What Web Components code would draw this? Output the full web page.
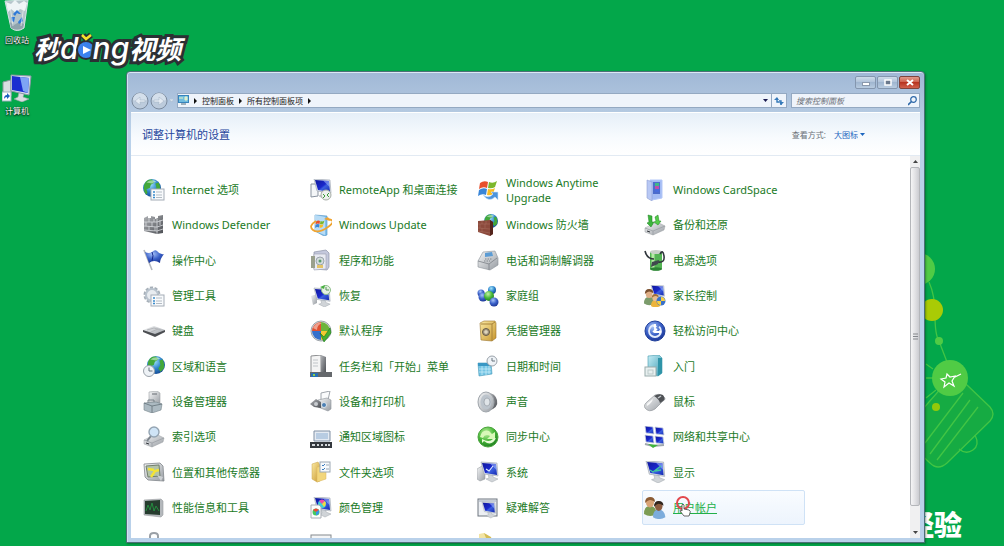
<!DOCTYPE html>
<html lang="zh-CN">
<head>
<meta charset="utf-8">
<title>控制面板</title>
<style>
  html, body {
    height: 100%;
    margin: 0;
  }

  body {
    overflow: hidden;
    font-family: "Noto Sans", "Noto Sans CJK SC", sans-serif;
    font-size: 11px;
  }
</style>
</head>
<body>
<desk-top></desk-top>

<script>
// shared gradients, every icon gets its own copy since ids stay inside a shadow root
const defs = `
  <defs>
    <linearGradient id="blue" x1="0" y1="0" x2="1" y2="1">
      <stop offset="0" stop-color="#10189c"/><stop offset=".5" stop-color="#1a28cc"/>
      <stop offset=".6" stop-color="#3c60e0"/><stop offset="1" stop-color="#1428b0"/>
    </linearGradient>
    <linearGradient id="gray" x1="0" y1="0" x2="1" y2="1">
      <stop offset="0" stop-color="#f6f7f8"/><stop offset="1" stop-color="#979ca2"/>
    </linearGradient>
    <linearGradient id="dark" x1="0" y1="0" x2="1" y2="1">
      <stop offset="0" stop-color="#b0b2b6"/><stop offset="1" stop-color="#4c4f54"/>
    </linearGradient>
    <radialGradient id="sea" cx=".4" cy=".3" r=".8">
      <stop offset="0" stop-color="#a4e4fa"/><stop offset=".5" stop-color="#2f86cc"/><stop offset="1" stop-color="#103c86"/>
    </radialGradient>
    <radialGradient id="green" cx=".4" cy=".3" r=".8">
      <stop offset="0" stop-color="#c4f2a4"/><stop offset=".5" stop-color="#48b838"/><stop offset="1" stop-color="#14701c"/>
    </radialGradient>
    <radialGradient id="ball" cx=".4" cy=".3" r=".8">
      <stop offset="0" stop-color="#a8c4f8"/><stop offset=".5" stop-color="#3a60c8"/><stop offset="1" stop-color="#162c88"/>
    </radialGradient>
    <linearGradient id="gold" x1="0" y1="0" x2="1" y2="1">
      <stop offset="0" stop-color="#fbeaa4"/><stop offset="1" stop-color="#c8962c"/>
    </linearGradient>
    <linearGradient id="aqua" x1="0" y1="0" x2="1" y2="1">
      <stop offset="0" stop-color="#c8eef6"/><stop offset="1" stop-color="#3a9cb4"/>
    </linearGradient>
  </defs>`;

const globe = (x, y, r) => `
  <g transform="translate(${x} ${y}) scale(${r / 8})">
    <circle r="8" fill="url(#sea)"/>
    <path d="M-7-3Q-5-8 0-7.500L2-5-1-3-2 0-5 1-4 4-5 6Q-8 3-7-3zM3-4L6-5Q8-1 7 3L4 6 2 3 4 0z" fill="#43a83a"/>
    <path d="M-5-5Q-1-8 4-6L0-4z" fill="#d4f4d8" opacity=".6"/>
  </g>`;

const clock = (x, y, r) => `
  <circle cx="${x}" cy="${y}" r="${r}" fill="#eef2f6" stroke="#9aa2aa"/>
  <path d="M${x} ${y - r + 2}V${y}H${x + r - 2}" fill="none" stroke="#68747e"/>`;

const list = (x, y) => `
  <rect x="${x}" y="${y}" width="13" height="11" fill="#f8fafc" stroke="#a4acb6"/>
  <path d="M${x + 2} ${y + 3}h2m-2 3h2m-2 2.500h2" stroke="#3a8ccc" stroke-width="1.500"/>
  <path d="M${x + 5} ${y + 3}h6m-6 3h6m-6 2.500h6" stroke="#b4bcc4"/>`;

const monitor = (x, y, s) => `
  <g transform="translate(${x} ${y}) scale(${s})">
    <path d="M7 12L12 13 12 15 17 17 11 20 5 17 8 16z" fill="#d0d4d8" stroke="#a2a8ae" stroke-width=".5"/>
    <path d="M0 0L16 1 17 14 3 12z" fill="#dde1e6" stroke="#9aa3b0" stroke-width=".6"/>
    <path d="M1 1L15 2 16 13 4 11z" fill="url(#blue)"/>
    <path d="M9 1.500L15 2 15.500 8Z" fill="#9cb8fa" opacity=".6"/>
  </g>`;

const tower = `<path d="M0 8L5 5 8 7V18L3 20 0 18z" fill="url(#gray)" stroke="#9b9fa5" stroke-width=".6"/>`;

const person = (x, y, s, skin, hair, shirt) => `
  <g transform="translate(${x} ${y}) scale(${s})">
    <path d="M0 17Q0 9 6 9T13 17Q6 21 0 17z" fill="${shirt}"/>
    <ellipse cx="6" cy="5.500" rx="4" ry="5" fill="${skin}"/>
    <path d="M1 6Q1 0 6 0T11 5Q8 3 6 3T1 6z" fill="${hair}"/>
  </g>`;

const flag = `
  <path d="M2 5Q6 2 10 4L9 10Q5 8 1 11z" fill="#e8502c"/>
  <path d="M11 4Q15 6 19 3L17 9Q14 11 10 10z" fill="#7cb82c"/>
  <path d="M1 12Q5 9 9 11L8 17Q4 15 0 18z" fill="#3a86d8"/>
  <path d="M10 11Q14 12 17 10L15 16Q12 18 9 17z" fill="#f8bc24"/>`;

const drive = `
  <path d="M1 14L13 8 21 12 20 16 9 21 1 18z" fill="url(#gray)" stroke="#9a9ea2" stroke-width=".5"/>
  <path d="M1 14L9 17 21 12M9 17V21" fill="none" stroke="#9b9fa5" stroke-width=".8"/>
  <path d="M3 17L6 18" stroke="#30343a"/>`;

const icons = {
  internet: globe(9, 9, 9) + list(8, 10),
  remote: `<path d="M1 5H8V17L1 18z" fill="#f4f6f8" stroke="#8a93a0"/>` + monitor(4, 0, 1) +
    `<circle cx="16" cy="16" r="5" fill="#eef0ee" stroke="#a8aea8"/><path d="M13 15l2 2-2 2m6-5-2 2 2 2" fill="none" stroke="#3c9c3c"/>`,
  anytime: `<g transform="translate(1 -1)">${flag}</g><path d="M6 16Q12 20 16 15L14 13 21 13V21L18 18Q12 24 6 16z" fill="#4c94dc" stroke="#d4e8fa" stroke-width=".6"/>`,
  card: `<path d="M6 1H18V19L8 21 6 19z" fill="#a4bcf4" stroke="#b4c8f8"/><path d="M3 1L8 3V22L3 19z" fill="#b8c8f4" stroke="#8f9fd4" stroke-width=".6"/>
    <path d="M9 3H16V15H9z" fill="#4c6ccc"/><path d="M11 7h4v3h-4z" fill="#c04cac"/><path d="M11 10h4v3h-4z" fill="#486cdc"/><path d="M11 4h4v3h-4z" fill="#40b888"/>`,
  defender: `<path d="M1 4L5 2 5 4 8 4 8 2 12 3 12 5 15 4 15 2 20 1V19L14 20 1 17z" fill="url(#dark)"/>
    <path d="M1 8H14L20 6M1 12L14 13 20 11M1 16L14 17 20 15M6 4V8M11 5V8M3 8V12M9 8V13M6 12V16M12 13V17M14 5V20M17 6V11" stroke="#d8dade" fill="none" stroke-width=".8"/>`,
  update: `<path d="M5 1L17 2V21L14 22 5 17z" fill="#84c0ec" stroke="#4c90c4" stroke-width=".6"/><path d="M5 1L15 3V21L5 17z" fill="#b8dcf6"/>
    <g transform="translate(5 5) scale(.5)">${flag}</g><path d="M6 7Q-2 12 3 16T18 13 17 5" fill="none" stroke="#f0a430" stroke-width="1.800"/><path d="M14 5L18 3 20 7z" fill="#f0a430"/>`,
  firewall: globe(14, 7, 7) + `<path d="M1 7L13 6 16 8V20L13 22 1 18z" fill="#8c4a3c"/><path d="M13 6L16 8V20L13 22z" fill="#54241c"/>
    <path d="M1 10H13M1 14L13 15M1 17L13 19M5 7V10M9 7V10M3 10V14M8 10V14M5 14V18" stroke="#a87060" stroke-width=".5"/>`,
  backup: drive + `<path d="M4 1L8 2 8 8 10 8 7 13 3 9 5 8z" fill="#3cb43c" stroke="#1c8020" stroke-width=".5"/><path d="M11 3L14 1 15 7 17 7 14 11 10 8 12 7z" fill="#54cc48" stroke="#1c8020" stroke-width=".5"/>`,
  action: `<path d="M1 1L9 21" stroke="#b4b8be" stroke-width="1.600"/><path d="M2 3Q6 5 9 3 12 0 14 2 17 6 21 5 17 10 17 14 11 10 6 14z" fill="url(#ball)"/><path d="M9 3Q11 6 9 12" stroke="#14288c" fill="none"/>`,
  programs: `<path d="M4 3L16 1 19 4V18L17 21 4 20z" fill="#c4c8dc" stroke="#8e93a8" stroke-width=".7"/><path d="M4 5H16V20L4 21z" fill="#e8eaf2" stroke="#9ba0b0" stroke-width=".6"/>
    <rect x="1" y="7" width="4" height="12" fill="#9aa08c"/><circle cx="10" cy="12" r="4" fill="#d4dcdc" stroke="#9aa4ac"/><circle cx="10" cy="12" r="1.500" fill="#5c9c6c"/><path d="M7 16h6v3H7z" fill="#e4c468"/>`,
  phone: `<path d="M1 12L6 3 18 2 21 9V16L13 21 1 18z" fill="url(#gray)" stroke="#8c9298" stroke-width=".6"/><path d="M8 4L15 3 16 7 8 8z" fill="#5c9cd4"/><path d="M1 12L12 15 20 9M12 15V21" fill="none" stroke="#7c8288" stroke-width=".8"/><path d="M8 10h7M7 12h6" stroke="#80868c" stroke-dasharray="1.500 1"/>`,
  power: `<path d="M6 3H18V20Q12 23 6 20z" fill="#54b454"/><path d="M9 3V20" stroke="#b4eca4" stroke-width="3"/><ellipse cx="12" cy="3" rx="6" ry="2" fill="#c8d0c8"/><ellipse cx="12" cy="20" rx="6" ry="1.800" fill="#2c8434"/>
    <path d="M1 2Q3 10 10 10M14 13Q21 14 20 7T16 5" fill="none" stroke="#30363c" stroke-width="1.600"/><path d="M8 13L15 11 14 15 7 18z" fill="#40484e"/>`,
  admin: `<circle cx="9" cy="10" r="7" fill="#e8ecf0" stroke="#a6afb8" stroke-width="3" stroke-dasharray="3 1.400"/><circle cx="9" cy="10" r="6" fill="none" stroke="#bac4ce" stroke-width="2"/>` + list(8, 10),
  recovery: `<path d="M1 11L7 9V18L3 20z" fill="url(#gray)"/>` + monitor(4, 3, .95) + `<circle cx="16" cy="5" r="4.500" fill="#e6f0e4" stroke="#8ec08a"/><path d="M16 2v3h3" fill="none" stroke="#58945c"/><path d="M10 2L15 0 14 4z" fill="#48b040"/>`,
  homegroup: `<circle cx="4" cy="8" r="3.500" fill="url(#ball)"/><circle cx="15" cy="5" r="4" fill="url(#sea)"/><circle cx="6" cy="12" r="4.500" fill="url(#ball)"/><circle cx="12" cy="11" r="5" fill="url(#green)"/><circle cx="17" cy="17" r="4.500" fill="url(#ball)"/>`,
  parental: monitor(7, 0, .8) + person(0, 4, .85, '#e0b088', '#7a5030', '#7c9c6c') + person(7, 9, .7, '#e8bc90', '#a07038', '#ecb43c') + `<circle cx="17" cy="16" r="4.500" fill="#3a70c8"/><path d="M17 16V12A4 4 0 0 1 21 16zM17 16V20A4 4 0 0 1 13 16z" fill="#f8d040"/>`,
  keyboard: `<path d="M0 10L11 6 22 10 12 16z" fill="url(#gray)"/><path d="M0 10L12 14 22 10V12L12 17 0 12z" fill="#4c4e52"/><path d="M4 10L11 8 18 10M8 12L15 9" stroke="#b4b6ba" fill="none"/>`,
  defaults: `<circle cx="11" cy="11" r="10" fill="#d4d8dc" stroke="#a0a6ac"/><path d="M11 11H2A9 9 0 0 1 11 2z" fill="#e05030"/><path d="M11 2A9 9 0 0 1 20 11H11z" fill="#6cb43c"/><path d="M2 11H11V20A9 9 0 0 1 2 11z" fill="#3470cc"/><path d="M11 11H20A9 9 0 0 1 11 20z" fill="#f4c830"/>
    <path d="M3 8Q6 2 12 3 7 5 7 10z" fill="#fff" opacity=".45"/><path d="M10 13L14 17 20 8 21 13 14 22z" fill="#44b030" stroke="#1c7818" stroke-width=".6"/>`,
  credential: `<path d="M3 3L7 1H18L19 3V18L15 21 4 20z" fill="url(#gold)" stroke="#9a742c" stroke-width=".6"/><path d="M15 4V21M4 4H15L18 2" fill="none" stroke="#a8843c"/><circle cx="9" cy="12" r="3.500" fill="#a89c84" stroke="#665a44"/><path d="M9 10v4M7 12h4" stroke="#f0e8d0"/>`,
  ease: `<circle cx="11" cy="11" r="10" fill="url(#ball)" stroke="#20409c"/><circle cx="11" cy="11" r="6" fill="none" stroke="#e4ecfc" stroke-width="1.800" stroke-dasharray="28 4"/><path d="M11 4V12H17M9 12L13 9" fill="none" stroke="#fff" stroke-width="1.800"/><path d="M9 7L11 4 13 7M15 10L18 12 15 14" fill="#fff"/>`,
  region: globe(13, 10, 9) + clock(6, 16, 5.5),
  taskbar: `<path d="M1 1L11 0V18H1z" fill="#f4f4f4" stroke="#8c8e90"/><path d="M11 0L16 2V18H11z" fill="url(#dark)"/><path d="M3 5h5m-5 3h5m-5 3h5" stroke="#c0c4c8"/><rect y="17" width="22" height="5" fill="#65686c"/><rect x="1" y="18" width="7" height="4" fill="#2870b4"/><path d="M3 19h2v2h-2z" fill="#90d048"/>`,
  date: `<path d="M1 8H14L15 19 2 21z" fill="#74c4e4" stroke="#4698b8" stroke-width=".6"/><path d="M1 8H14V11H1z" fill="#3a98c4"/><path d="M2 14h12M2 17h12M5 11v9M9 11v9M12 11v8" stroke="#d0f0fa" stroke-width=".7"/>` + clock(15, 6, 5),
  start: `<path d="M4 1L15 0 18 3V18L14 21 4 18z" fill="url(#aqua)" stroke="#3f98ac" stroke-width=".6"/><path d="M14 3L18 3V18L14 21z" fill="#2f94a8"/><rect x="1" y="12" width="11" height="9" fill="#e8f0f0" stroke="#9aacac"/><rect x="4" y="15" width="5" height="4" fill="none" stroke="#bccaca"/>`,
  devmgr: `<path d="M6 1L14 0 17 2V13L8 14 6 12z" fill="url(#gray)" stroke="#9da2a6" stroke-width=".6"/><path d="M9 3h5" stroke="#646a70"/><path d="M1 12L13 11 19 13 18 19 9 22 1 19z" fill="#acbac2" stroke="#76848c" stroke-width=".6"/><path d="M1 12L9 15 19 13M9 15V22M5 12V9H11V11" stroke="#64727a" fill="none" stroke-width=".8"/>`,
  printer: `<path d="M11 2L20 0 18 9 11 9z" fill="#fafbfc" stroke="#a0a6ac"/><path d="M8 9L17 7 21 9V18L18 20 8 16z" fill="url(#gray)" stroke="#8c9298" stroke-width=".6"/><path d="M0 13L6 8 11 11V17L4 16z" fill="url(#dark)"/><circle cx="6" cy="13" r="2" fill="#c8ccd0"/><circle cx="14" cy="14" r="2.500" fill="#4c80b4" stroke="#dfe4e8"/>`,
  sound: `<path d="M9 2Q18 1 20 9T11 20z" fill="url(#dark)"/><ellipse cx="9" cy="11" rx="8" ry="10" fill="url(#gray)" stroke="#9ea4aa"/><ellipse cx="9" cy="11" rx="5.500" ry="7.500" fill="#bcc4cc"/><ellipse cx="10" cy="11" rx="3" ry="4" fill="#dfe4e8" stroke="#8a9198" stroke-width=".6"/>`,
  mouse: `<path d="M1 17Q-1 14 4 10L11 4Q15 2 19 5T19 10L11 18Q5 22 1 17z" fill="url(#gray)" stroke="#84898e" stroke-width=".6"/><path d="M10 5Q15 2 19 4 22 8 19 10L16 12Q15 8 10 5z" fill="#4f5256"/><path d="M3 15Q2 13 5 11L9 8Q8 12 3 15z" fill="#fff" opacity=".8"/><path d="M14 7L17 5" stroke="#c4c8cc" stroke-width="1.500"/>`,
  indexing: drive + `<path d="M8 10L4 15" stroke="#7c848c" stroke-width="2"/><circle cx="11" cy="6" r="5" fill="#cfe4f6" stroke="#94a4b2" stroke-width="1.400"/>`,
  tray: `<path d="M4 5H20V15H4z" fill="#e4eaf2" stroke="#8090a4"/><path d="M6 7H18V13H6z" fill="#b8cce2"/><rect y="16" width="22" height="6" fill="#34383e"/><path d="M2 19h3m2 0h2m2 0h2m2 0h2m1 0h2" stroke="#d4d8dc" stroke-width="2"/>`,
  sync: `<circle cx="11" cy="11" r="10" fill="url(#green)" stroke="#4aa43c"/><path d="M3 11Q5 3 12 5L15 8 18 6V13H10L13 10Q8 7 6 12z" fill="#d8f8b8"/><path d="M19 12Q16 19 10 17L7 15 5 17V13Q12 17 16 13z" fill="#e8fcd8"/>`,
  network: [[1, 0], [11, 1], [1, 9], [11, 10]].map(([x, y]) => `<path d="M${x} ${y}l8 1 1 7-8-1z" fill="url(#blue)" stroke="#ccd4e0" stroke-width=".8"/>`).join('') + `<path d="M1 18L9 20 20 19" fill="none" stroke="#a0a8ae" stroke-width="2"/><path d="M4 18L14 19 9 22z" fill="#40b43c"/>`,
  location: `<path d="M1 3L17 2 20 5 21 20 5 19 2 16z" fill="url(#gray)" stroke="#82878c" stroke-width=".8"/><path d="M3 5L16 4 17 15 5 16z" fill="#b4c4a8" stroke="#72806c"/><path d="M8 16L12 10 16 9M5 8L11 9" stroke="#f4e434" stroke-width="2.400" fill="none"/><path d="M14 14L20 16 18 20z" fill="#cdd1d4"/>`,
  folder: `<path d="M2 3L8 1 10 4V20L7 21 2 18z" fill="url(#gold)" stroke="#c8a44c" stroke-width=".5"/><path d="M7 6L16 5V18L7 21z" fill="#f2d67c" stroke="#d8b45c" stroke-width=".5"/><rect x="10" y="1" width="10" height="10" fill="#f6f9fc" stroke="#9ca8b4"/><path d="M12 4l1 1 2-2m-3 5 1 1 2-2" stroke="#3a7cc0" fill="none"/><path d="M16 4h3m-3 4h3" stroke="#9ca8b4"/>`,
  system: tower + monitor(4, 1, 1) + `<path d="M9 8L12 10 16 5" fill="none" stroke="#dceaff" stroke-width="1.200"/>`,
  display: monitor(2, 0, 1.1) + `<path d="M6 9L9 11 17 5M11 10L17 9" fill="none" stroke="#40c8a0" stroke-width="1.300"/>`,
  performance: `<path d="M1 3L18 2 20 4V18L18 20 1 18z" fill="#b4b8bc" stroke="#989c9f" stroke-width=".6"/><path d="M2 4L17 3V18L2 17z" fill="#263c2e"/><path d="M3 14L5 8 7 13 9 6 11 14 13 9 16 14" fill="none" stroke="#268c40"/>`,
  color: monitor(4, 0, 1) + `<circle cx="12" cy="7" r="4" fill="#40d0d8"/><path d="M12 7L9 4Q12 1 15 4z" fill="#f04ca4"/><path d="M12 7L15 4Q17 7 14 10z" fill="#f8d83c"/><path d="M1 8H9L11 10V21H1z" fill="#fdfdfd" stroke="#a8adb4"/>
    <circle cx="6" cy="15" r="3.500" fill="#44c860"/><path d="M6 15L3 13Q6 10 9 13z" fill="#f04838"/><path d="M6 15L9 13Q10 17 6 18.500z" fill="#3894ec"/>`,
  trouble: `<rect x="1" y="2" width="19" height="17" fill="#eceff3" stroke="#6e7680"/><path d="M2 3H19V5H2z" fill="#c4ccd6"/>` + monitor(5, 5, .8),
  users: person(0, 0, 1, '#d8a478', '#8c5c34', '#7c9c54') + person(9, 4, .95, '#8c5c40', '#30241c', '#7cacdc'),
  lock: `<path d="M7 14V4Q7 1 11 1T15 4V14" fill="none" stroke="#9aa0a6" stroke-width="2"/>`,
  window: `<rect x="1" y="3" width="20" height="16" fill="#f4f5f6" stroke="#84898e"/>`,
  note: `<path d="M2 2L7 1 15 7 15 20H2z" fill="#f2e4a4"/><path d="M7 1L14 5 15 8 9 6z" fill="#d4bc54"/>`,
};

class CpIcon extends HTMLElement {
  constructor() {
    super();
    this.attachShadow({ mode: 'open' });
  }

  connectedCallback() {
    this.shadowRoot.innerHTML = `
      <style>
        :host { display: block; flex: none; width: 22px; height: 22px; }
        svg { display: block; width: 100%; height: 100%; }
      </style>
      <svg viewBox="0 0 22 22" aria-hidden="true">${defs}${icons[this.getAttribute('name')]}</svg>`;
  }
}
customElements.define('cp-icon', CpIcon);

class CpItem extends HTMLElement {
  constructor() {
    super();
    this.attachShadow({ mode: 'open' });
  }

  connectedCallback() {
    this.shadowRoot.innerHTML = `
      <style>
        :host { display: block; min-width: 0; }
        a {
          display: flex;
          align-items: center;
          gap: 7px;
          box-sizing: border-box;
          height: 100%;
          padding: 0 1px;
          border: 1px solid transparent;
          border-radius: 2px;
          color: #1b7a26;
          line-height: 15px;
          text-decoration: none;
        }
        :host([active]) a {
          border-color: #cfe2f6;
          background: linear-gradient(#f9fcff, #edf4fd);
          color: #22b048;
          text-decoration: underline;
        }
      </style>
      <a href="#"><cp-icon name="${this.getAttribute('icon')}"></cp-icon><span><slot></slot></span></a>`;
  }
}
customElements.define('cp-item', CpItem);

class ScrollBar extends HTMLElement {
  constructor() {
    super();
    this.attachShadow({ mode: 'open' }).innerHTML = `
      <style>
        :host { display: flex; flex-direction: column; flex: none; width: 10px; background: #f0f0f1; }
        button { flex: none; height: 11px; padding: 0; border: 0; background: none; }
        svg { display: block; margin: auto; }
        .track { flex: 1; display: flex; flex-direction: column; }
        .thumb {
          flex: 94;
          display: flex;
          align-items: center;
          border: 1px solid #b4b6ba;
          border-radius: 2px;
          background: linear-gradient(90deg, #f5f5f6, #e2e2e5 50%, #cbccd1);
        }
        .rest { flex: 6; }
      </style>
      <button aria-label="向上"><svg width="5" height="3"><path d="M0 3L2.500 0 5 3z" fill="#444"/></svg></button>
      <div class="track">
        <div class="thumb"><svg width="5" height="7"><path d="M0 1h5M0 3.500h5M0 6h5" stroke="#84878c"/></svg></div>
        <div class="rest"></div>
      </div>
      <button aria-label="向下"><svg width="5" height="3"><path d="M0 0L2.500 3 5 0z" fill="#444"/></svg></button>`;
  }
}
customElements.define('scroll-bar', ScrollBar);

class WindowButtons extends HTMLElement {
  constructor() {
    super();
    this.attachShadow({ mode: 'open' }).innerHTML = `
      <style>
        :host { display: flex; gap: 1px; }
        button {
          display: grid;
          place-items: center;
          width: 21px;
          height: 13px;
          padding: 0;
          border: 1px solid #8496ae;
          border-radius: 2px;
          background: linear-gradient(#cfdcea, #adc0d8 50%, #a0b6d0 50%, #b8cbe0);
        }
        .close { border-color: #80443c; background: linear-gradient(#e09a8c, #cc5c48 50%, #b83420 50%, #d0604c); }
      </style>
      <button aria-label="最小化"><svg width="8" height="7"><rect x=".5" y="3.500" width="7" height="3" fill="#fff" stroke="#8a98ac"/></svg></button>
      <button aria-label="最大化"><svg width="8" height="7"><rect x="1" y="1" width="6" height="5" fill="#6a788c" stroke="#fff" stroke-width="1.500"/></svg></button>
      <button class="close" aria-label="关闭"><svg width="8" height="7"><path d="M1 1L7 6M7 1L1 6" stroke="#fff" stroke-width="2"/></svg></button>`;
  }
}
customElements.define('window-buttons', WindowButtons);

class AddressBar extends HTMLElement {
  constructor() {
    super();
    this.attachShadow({ mode: 'open' }).innerHTML = `
      <style>
        :host { display: flex; align-items: center; gap: 4px; font-size: 8px; }
        button { padding: 0; border: 0; background: none; }
        svg { display: block; }
        .nav { display: flex; align-items: center; gap: 1px; width: 42px; }
        .path, .search {
          display: flex;
          align-items: center;
          box-sizing: border-box;
          height: 15px;
          border: 1px solid #94a9c2;
          background: #eff4fb;
        }
        .path { flex: 1; min-width: 0; }
        nav { flex: 1; display: flex; align-items: center; gap: 5px; }
        a { color: #222; text-decoration: none; line-height: 12px; }
        .drop { width: 12px; }
        .drop svg { margin: auto; }
        .refresh { width: 15px; height: 13px; border-left: 1px solid #94a9c2; }
        .refresh svg { margin: auto; }
        .search { width: 129px; padding: 0 2px 0 4px; }
        label { display: flex; }
        input {
          flex: 1;
          min-width: 0;
          padding: 0;
          border: 0;
          outline: 0;
          background: none;
          font: italic 8px "Noto Sans", "Noto Sans CJK SC", sans-serif;
        }
        input::placeholder { color: #6c7078; }
      </style>
      <div class="nav">
        <button aria-label="后退"><svg width="18" height="18" viewBox="0 0 18 18"><circle cx="9" cy="9" r="8" fill="#bccbdc" stroke="#7c8b9e"/><path d="M2 8A7 7 0 0 1 16 8Q9 11 2 8z" fill="#d4dfeb"/><path d="M4 9L9 5V8H14V10H9V13z" fill="#e4ebf3" stroke="#a2b1c2" stroke-width=".5"/></svg></button>
        <button aria-label="前进"><svg width="18" height="18" viewBox="0 0 18 18"><circle cx="9" cy="9" r="8" fill="#bccbdc" stroke="#7c8b9e"/><path d="M2 8A7 7 0 0 1 16 8Q9 11 2 8z" fill="#d4dfeb"/><path d="M14 9L9 5V8H4V10H9V13z" fill="#e4ebf3" stroke="#a2b1c2" stroke-width=".5"/></svg></button>
        <svg width="5" height="4"><path d="M0 0H5L2.500 3z" fill="#d6e2ee" stroke="#a4b4c6" stroke-width=".5"/></svg>
      </div>
      <div class="path">
        <nav>
          <svg width="11" height="11" viewBox="0 0 11 11"><path d="M0 0H11V8H0z" fill="#3784bc"/><path d="M1 1H10V7H1z" fill="#6fbce0"/><path d="M1 3h4M7 2h2v3H7z" stroke="#e8f4c0" fill="#c8e4f4"/><path d="M3 8H8V10H3z" fill="#9fb0bc"/></svg>
          <svg width="3" height="6"><path d="M0 0L3 3 0 6z" fill="#111"/></svg>
          <a href="#">控制面板</a>
          <svg width="3" height="6"><path d="M0 0L3 3 0 6z" fill="#111"/></svg>
          <a href="#">所有控制面板项</a>
          <svg width="3" height="6"><path d="M0 0L3 3 0 6z" fill="#111"/></svg>
        </nav>
        <button class="drop" aria-label="历史"><svg width="5" height="3"><path d="M0 0H5L2.500 3z" fill="#1a1a50"/></svg></button>
        <button class="refresh" aria-label="刷新"><svg width="10" height="10" viewBox="0 0 10 10"><path d="M3 2V6H5M7 9V5H5" fill="none" stroke="#3478b8" stroke-width="1.400"/><path d="M0 4L3 1 5 4zM5 6L7 9 10 6z" fill="#3478b8"/></svg></button>
      </div>
      <div class="search">
        <input id="q" type="text" placeholder="搜索控制面板">
        <label for="q" aria-label="搜索"><svg width="9" height="10" viewBox="0 0 9 10"><circle cx="5.500" cy="3.500" r="2.800" fill="none" stroke="#2e68a8" stroke-width="1.200"/><path d="M3.500 5.500L0 9" stroke="#2e68a8" stroke-width="1.600"/></svg></label>
      </div>`;
  }
}
customElements.define('address-bar', AddressBar);

class ExplorerWindow extends HTMLElement {
  constructor() {
    super();
    this.attachShadow({ mode: 'open' }).innerHTML = `
      <style>
        :host {
          display: flex;
          flex-direction: column;
          box-sizing: border-box;
          padding: 0 4px 4px;
          border: 1px solid #4d6f78;
          border-radius: 4px 4px 0 0;
          background: linear-gradient(#a0b8d6, #b4c9e1 40px, #b9d1ea 60px);
          box-shadow: inset 0 1px #dce8f4, inset 1px 0 #d2e2f2, 1px 1px 2px rgba(0, 40, 20, .4);
        }
        window-buttons { align-self: flex-end; padding-top: 4px; }
        address-bar { height: 23px; }
        .page {
          flex: 1;
          display: flex;
          flex-direction: column;
          min-height: 0;
          padding-top: 1px;
          background: #fff;
        }
        header {
          display: flex;
          align-items: center;
          box-sizing: border-box;
          height: 43px;
          padding: 0 55px 0 11px;
          border-bottom: 1px solid #e2eaf3;
          background: linear-gradient(#e6eff8, #f8fbfe 60%, #fff);
        }
        h1 { flex: 1; margin: 0; color: #24459c; font-size: 11px; font-weight: 400; }
        label { color: #6a7078; font-size: 8px; }
        select {
          appearance: none;
          margin-left: 8px;
          padding: 0 2px 0 0;
          border: 0;
          background: none;
          color: #1d66c0;
          font: 8px "Noto Sans", "Noto Sans CJK SC", sans-serif;
        }
        .body { flex: 1; display: flex; min-height: 0; }
        .list {
          flex: 1;
          display: grid;
          grid-template-columns: repeat(auto-fill, 163px);
          grid-template-rows: repeat(12, 1fr);
          column-gap: 4px;
          align-self: flex-start;
          min-height: 424px;
          padding: 16px 0 0 10px;
        }
        .clip { flex: 1; overflow: hidden; display: flex; }
      </style>
      <window-buttons></window-buttons>
      <address-bar></address-bar>
      <div class="page">
        <header>
          <h1>调整计算机的设置</h1>
          <label for="view">查看方式:</label>
          <select id="view"><option>大图标</option></select>
          <svg width="5" height="3" aria-hidden="true"><path d="M0 0H5L2.500 3z" fill="#1d66c0"/></svg>
        </header>
        <div class="body">
          <div class="clip"><div class="list"><slot></slot></div></div>
          <scroll-bar></scroll-bar>
        </div>
      </div>`;
  }
}
customElements.define('explorer-window', ExplorerWindow);

class DesktopIcon extends HTMLElement {
  constructor() {
    super();
    this.attachShadow({ mode: 'open' }).innerHTML = `
      <style>
        :host { display: block; width: 34px; }
        a {
          display: flex;
          flex-direction: column;
          align-items: center;
          gap: 3px;
          color: #fff;
          font-size: 8px;
          line-height: 12px;
          text-decoration: none;
          text-shadow: 0 1px 2px #000, 0 0 1px #000;
        }
      </style>
      <a href="#"><slot name="picture"></slot><span><slot></slot></span></a>`;
  }
}
customElements.define('desktop-icon', DesktopIcon);

class BrandLogo extends HTMLElement {
  constructor() {
    super();
    this.attachShadow({ mode: 'open' }).innerHTML = `
      <style>
        :host {
          display: flex;
          align-items: center;
          color: #fff;
          font: italic 700 26px/32px "Noto Sans CJK SC", sans-serif;
          -webkit-text-stroke: 6px #2b3034;
          paint-order: stroke fill;
        }
        .latin { font: italic 500 30px/32px Inter, sans-serif; }
        svg { display: block; margin: 0 -1px; overflow: visible; }
      </style>
      <span>秒</span><span class="latin">d</span>
      <svg width="16" height="32" viewBox="0 0 16 32" aria-hidden="true">
        <circle cx="8" cy="18" r="10" fill="#2b3034"/>
        <path d="M5 3L8 7 13 3" fill="none" stroke="#2b3034" stroke-width="6"/>
        <circle cx="8" cy="18" r="8" fill="#3b82ee"/>
        <path d="M5 14L13 18 5 22z" fill="#fff"/>
        <path d="M4 3L8 7 13 3" fill="none" stroke="#f8e02c" stroke-width="2.500"/>
      </svg>
      <span class="latin">ng</span><span>视频</span>`;
  }
}
customElements.define('brand-logo', BrandLogo);

class DeskTop extends HTMLElement {
  constructor() {
    super();
    this.attachShadow({ mode: 'open' });
  }

  connectedCallback() {
    const rows = [
      ['internet', 'Internet 选项'], ['remote', 'RemoteApp 和桌面连接'], ['anytime', 'Windows Anytime Upgrade'], ['card', 'Windows CardSpace'],
      ['defender', 'Windows Defender'], ['update', 'Windows Update'], ['firewall', 'Windows 防火墙'], ['backup', '备份和还原'],
      ['action', '操作中心'], ['programs', '程序和功能'], ['phone', '电话和调制解调器'], ['power', '电源选项'],
      ['admin', '管理工具'], ['recovery', '恢复'], ['homegroup', '家庭组'], ['parental', '家长控制'],
      ['keyboard', '键盘'], ['defaults', '默认程序'], ['credential', '凭据管理器'], ['ease', '轻松访问中心'],
      ['region', '区域和语言'], ['taskbar', '任务栏和「开始」菜单'], ['date', '日期和时间'], ['start', '入门'],
      ['devmgr', '设备管理器'], ['printer', '设备和打印机'], ['sound', '声音'], ['mouse', '鼠标'],
      ['indexing', '索引选项'], ['tray', '通知区域图标'], ['sync', '同步中心'], ['network', '网络和共享中心'],
      ['location', '位置和其他传感器'], ['folder', '文件夹选项'], ['system', '系统'], ['display', '显示'],
      ['performance', '性能信息和工具'], ['color', '颜色管理'], ['trouble', '疑难解答'], ['users', '用户帐户'],
      ['lock', ''], ['window', ''], ['note', ''],
    ];
    const items = rows.map(([icon, name]) =>
      `<cp-item icon="${icon}"${icon === 'users' ? ' active' : ''}>${name}</cp-item>`).join('');

    this.shadowRoot.innerHTML = `
      <style>
        :host { display: block; position: relative; height: 100%; overflow: hidden; background: #03a74a; }
        .shortcuts { display: flex; flex-direction: column; gap: 28px; width: 34px; }
        brand-logo { position: absolute; left: 34px; top: 32px; }
        .art { position: absolute; right: 0; top: 240px; }
        .wall {
          position: absolute;
          right: 42px;
          bottom: 6px;
          color: #fff;
          font: 900 28px/32px "Noto Sans CJK SC", sans-serif;
        }
        explorer-window { position: absolute; inset: 71px 79px 3px 126px; }
        .pointer { position: absolute; left: 676px; top: 495px; }
      </style>
      <div class="shortcuts">
        <desktop-icon>
          <svg slot="picture" width="26" height="31" viewBox="0 0 26 31" aria-hidden="true">
            <path d="M1 1L24 0 20 28Q13 33 7 28z" fill="#b4c4ca" stroke="#d6e2e6"/>
            <path d="M2 2L7 4 11 0 15 4 20 1 23 3 21 11 16 9 12 13 7 9 4 12z" fill="#eef4f6"/>
            <path d="M6 22L10 25 15 22 20 24 19 28Q13 31 7 28z" fill="#8fa3ac"/>
            <path d="M9 14L13 10 17 14H15L13 13 11 16zM7 17H11L10 22 8 21zM14 22L18 17 19 21 15 24z" fill="#2f7ad8"/>
            <path d="M6 6L9 26M20 5L17 26" stroke="#f6fafa" opacity=".6"/>
          </svg>回收站
        </desktop-icon>
        <desktop-icon>
          <svg slot="picture" width="30" height="28" viewBox="0 0 30 28" aria-hidden="true">
            <path d="M1 8L9 6V22L4 24 1 22z" fill="#dadfe2" stroke="#8e989e"/>
            <path d="M17 18L22 20 21 23 27 25 20 28 12 25 16 23z" fill="#d8dde0" stroke="#98a2a8" stroke-width=".6"/>
            <path d="M9 1L29 2 27 21 9 17z" fill="#dce4ec" stroke="#8b98a8"/>
            <path d="M10 2L27 4 26 19 10 16z" fill="#1c2ed0"/><path d="M18 3L27 4 26 19 21 17z" fill="#7ea4f4"/>
            <rect y="18" width="9" height="9" fill="#fff" stroke="#9fb0c0"/><path d="M2 25Q2 21 5 21V19L8 22 5 25V23Q3 23 2 25z" fill="#1c60c0"/>
          </svg>计算机
        </desktop-icon>
      </div>
      <brand-logo></brand-logo>
      <svg class="art" width="124" height="240" viewBox="0 0 124 240" aria-hidden="true">
        <g fill="none" stroke="#42c544" stroke-width="1.300">
          <path d="M87 145L110 167Q116 174 110 181L67 223Q58 231 50 223L20 195 70 138z" fill="#16ab43"/>
          <path d="M83 153L45 203M90 160L50 214M98 167L57 220M95 195Q100 205 93 210T79 209M46 124L53 129M46 138H53M46 158L56 150"/>
          <path d="M49 42Q55 55 55 75T59 101L67 122"/>
        </g>
        <circle cx="39" cy="29" r="16" fill="#50cb45"/>
        <circle cx="52" cy="70" r="11" fill="#a9cb05"/>
        <circle cx="59" cy="101" r="4" fill="#50cb45"/>
        <circle cx="56" cy="167" r="4" fill="#93c90a"/>
        <circle cx="70" cy="138" r="18" fill="#50cb45"/>
        <path d="M67 134L70 137 75 136 72 141 74 146 69 143 64 147 65 142 61 139 66 138zM75 137L81 134" fill="none" stroke="#fff" stroke-width="1.200"/>
      </svg>
      <div class="wall">经验</div>
      <explorer-window>${items}</explorer-window>
      <svg class="pointer" width="16" height="22" viewBox="0 0 16 22" aria-hidden="true">
        <circle cx="7" cy="8" r="6" fill="none" stroke="#e2484c" stroke-width="2"/>
        <path d="M6 10Q7 8 8 10V14L13 15Q15 16 14 18L13 21H8L4 16Q4 14 6 16z" fill="#fff" stroke="#444" stroke-width=".8"/>
      </svg>`;
  }
}
customElements.define('desk-top', DeskTop);
</script>
</body>
</html>
